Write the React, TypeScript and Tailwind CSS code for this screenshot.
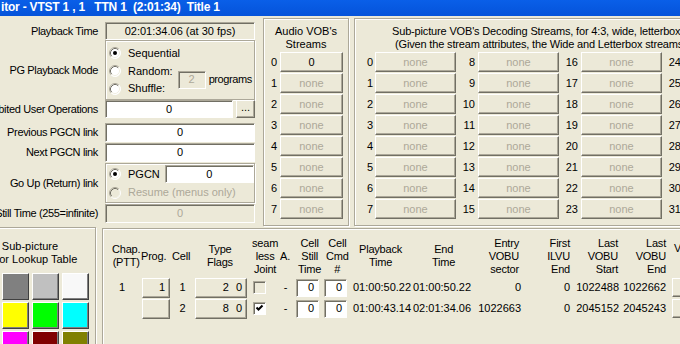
import clsx from "clsx";

const raised =
  "bg-[#ECE9D8] border border-t-white border-l-white border-r-[#716F64] border-b-[#716F64] shadow-[inset_-1px_-1px_0_#ACA899]";
const sunken =
  "border border-t-[#ACA899] border-l-[#ACA899] border-r-white border-b-white shadow-[inset_1px_1px_0_#716F64]";
const groupBox =
  "border border-[#ACA899] shadow-[inset_1px_1px_0_#fff,1px_1px_0_#fff]";

const Edit = ({
  value,
  className,
  white,
  disabled,
  align = "center",
}: {
  value: string;
  className?: string;
  white?: boolean;
  disabled?: boolean;
  align?: "center" | "right";
}) => (
  <div
    className={clsx(
      "flex items-center shrink-0",
      sunken,
      white ? "bg-white" : "bg-[#ECE9D8]",
      disabled ? "text-[#ACA899]" : "text-black",
      align === "right" ? "justify-end pr-[4px]" : "justify-center",
      className
    )}
  >
    {value}
  </div>
);

const Radio = ({ checked, disabled }: { checked?: boolean; disabled?: boolean }) => (
  <svg width="12" height="12" viewBox="0 0 12 12" className="shrink-0">
    <circle cx="6" cy="6" r="5.5" fill={disabled ? "#ECE9D8" : "#fff"} />
    <path d="M2.11 9.89 A5.5 5.5 0 0 1 9.89 2.11" stroke="#ACA899" fill="none" />
    <path d="M2.82 9.18 A4.5 4.5 0 0 1 9.18 2.82" stroke="#716F64" fill="none" />
    <path d="M9.89 2.11 A5.5 5.5 0 0 1 2.11 9.89" stroke="#fff" fill="none" />
    <path d="M9.18 2.82 A4.5 4.5 0 0 1 2.82 9.18" stroke="#F1EFE2" fill="none" />
    {checked && <circle cx="6" cy="6" r="2" fill="#000" />}
  </svg>
);

const Check = ({ checked }: { checked?: boolean }) => (
  <div className={clsx("w-[13px] h-[13px] shrink-0 flex items-center justify-center", sunken, checked ? "bg-white" : "bg-[#ECE9D8]")}>
    {checked && (
      <svg width="9" height="9" viewBox="0 0 9 9">
        <path d="M1.5 3.5 L3.5 5.5 L7.5 1.5" stroke="#000" strokeWidth="2" fill="none" />
      </svg>
    )}
  </div>
);

const LabelRow = ({ label, h, children, className }: { label: string; h: string; children: React.ReactNode; className?: string }) => (
  <div className={clsx("flex items-center shrink-0", h, className)}>
    <div className="w-[138px] text-right whitespace-nowrap tracking-[-0.35px]">{label}</div>
    <div className="ml-[7px] w-[150px] h-full flex">{children}</div>
  </div>
);

const palette = [
  "#000000", "#808080", "#C0C0C0", "#F8F8F8",
  "#0000FF", "#FFFF00", "#00FF00", "#00FFFF",
  "#FF0000", "#FF00FF", "#800000", "#808000",
  "#000080", "#008080", "#008000", "#800080",
];

const headers: { w: string; align: "left" | "right"; lines: string[] }[] = [
  { w: "w-[29px]", align: "left", lines: ["Chap.", "(PTT)"] },
  { w: "w-[31px]", align: "left", lines: ["Prog."] },
  { w: "w-[35px]", align: "left", lines: ["Cell"] },
  { w: "w-[45px]", align: "left", lines: ["Type", "Flags"] },
  { w: "w-[28px]", align: "left", lines: ["seam", "less", "Joint"] },
  { w: "w-[18px]", align: "left", lines: ["A."] },
  { w: "w-[28px]", align: "left", lines: ["Cell", "Still", "Time"] },
  { w: "w-[33px]", align: "left", lines: ["Cell", "Cmd", "#"] },
  { w: "w-[73px]", align: "left", lines: ["Playback", "Time"] },
  { w: "w-[40px]", align: "left", lines: ["End", "Time"] },
  { w: "w-[47px]", align: "right", lines: ["Entry", "VOBU", "sector"] },
  { w: "w-[51px]", align: "right", lines: ["First", "ILVU", "End"] },
  { w: "w-[48px]", align: "right", lines: ["Last", "VOBU", "Start"] },
  { w: "w-[48px]", align: "right", lines: ["Last", "VOBU", "End"] },
];

const cells = [
  { chap: "1", prog: "1", cell: "1", type: "2", flag: "0", seam: false, play: "01:00:50.22", end: "01:00:50.22", entry: "0", first: "0", lstart: "1022488", lend: "1022662" },
  { chap: "", prog: "", cell: "2", type: "8", flag: "0", seam: true, play: "01:00:43.14", end: "02:01:34.06", entry: "1022663", first: "0", lstart: "2045152", lend: "2045243" },
];

export default function App() {
  return (
    <div className="w-[680px] h-[344px] overflow-hidden bg-[#ECE9D8] flex flex-col font-['Liberation_Sans',Arial,sans-serif] text-[11px] leading-[13px] text-black">
      {/* title bar */}
      <div className="h-[16px] shrink-0 bg-gradient-to-b from-[#0A5FE8] to-[#0553DA] text-white font-bold text-[12px] leading-[15px] whitespace-pre pl-[1px] tracking-[-0.2px]">
        {"itor - VTST 1 , 1   TTN 1  (2:01:34)  Title 1"}
      </div>

      {/* top area */}
      <div className="flex h-[211px] shrink-0">
        <div className="ml-[-40px] w-[303px] shrink-0 flex flex-col pt-[6px]">
          <LabelRow label="Playback Time" h="h-[18px]">
            <Edit value="02:01:34.06 (at 30 fps)" className="w-[150px] h-[18px]" />
          </LabelRow>
          <LabelRow label="PG Playback Mode" h="h-[60px]">
            <div className={clsx("w-[150px] h-[60px] flex flex-col pl-[3px] pt-[3px]", groupBox)}>
              <div className="flex items-center h-[18px]">
                <Radio checked />
                <span className="ml-[7px]">Sequential</span>
              </div>
              <div className="flex items-center">
                <div className="flex flex-col">
                  <div className="flex items-center h-[18px]">
                    <Radio />
                    <span className="ml-[7px]">Random:</span>
                  </div>
                  <div className="flex items-center h-[17px]">
                    <Radio />
                    <span className="ml-[7px]">Shuffle:</span>
                  </div>
                </div>
                <Edit value="2" disabled className="ml-[5px] w-[28px] h-[18px]" />
                <span className="ml-[3px] tracking-[-0.4px]">programs</span>
              </div>
            </div>
          </LabelRow>
          <LabelRow label="Prohibited User Operations" h="h-[18px]">
            <Edit value="0" white className="w-[128px] h-[18px]" />
            <div className={clsx("ml-[3px] w-[19px] h-[18px] flex items-end justify-center pb-[3px]", raised)}>...</div>
          </LabelRow>
          <LabelRow label="Previous PGCN link" h="h-[19px]" className="mt-[5px]">
            <Edit value="0" white className="w-[150px] h-[19px]" />
          </LabelRow>
          <LabelRow label="Next PGCN link" h="h-[19px]" className="mt-[1px]">
            <Edit value="0" white className="w-[150px] h-[19px]" />
          </LabelRow>
          <LabelRow label="Go Up (Return) link" h="h-[40px]" className="mt-[1px]">
            <div className={clsx("w-[150px] h-[40px] flex flex-col pl-[3px] pr-[3px] pt-[1px]", groupBox)}>
              <div className="flex items-center h-[18px]">
                <Radio checked />
                <span className="ml-[7px]">PGCN</span>
                <Edit value="0" white className="ml-[5px] w-[89px] h-[18px]" />
              </div>
              <div className="flex items-center h-[19px] text-[#ACA899]">
                <Radio disabled />
                <span className="ml-[7px]">Resume (menus only)</span>
              </div>
            </div>
          </LabelRow>
          <LabelRow label="Still Time (255=infinite)" h="h-[19px]" className="mt-[1px]">
            <Edit value="0" disabled className="w-[150px] h-[19px]" />
          </LabelRow>
        </div>

        {/* audio streams */}
        <div className={clsx("mt-[2px] h-[208px] w-[86px] shrink-0 flex flex-col pt-[6px]", groupBox)}>
          <div className="text-center">
            Audio VOB's
            <br />
            Streams
          </div>
          <div className="mt-[1px] flex flex-col gap-[1px]">
            {[0, 1, 2, 3, 4, 5, 6, 7].map((i) => (
              <div key={i} className="flex items-center h-[20px]">
                <div className="w-[16px] pl-[7px]">{i}</div>
                <div className={clsx("w-[63px] h-[20px] flex items-center justify-center", raised, i === 0 ? "text-black" : "text-[#ACA899]")}>
                  {i === 0 ? "0" : "none"}
                </div>
              </div>
            ))}
          </div>
        </div>

        {/* sub-picture streams */}
        <div className={clsx("ml-[5px] mt-[2px] h-[208px] w-[430px] shrink-0 flex flex-col pt-[6px]", groupBox)}>
          <div className="pl-[37px] whitespace-nowrap tracking-[-0.16px]">Sub-picture VOB's Decoding Streams, for 4:3, wide, letterbox, pan-scan</div>
          <div className="pl-[40px] whitespace-nowrap tracking-[-0.16px]">(Given the stream attributes, the Wide and Letterbox streams are used)</div>
          <div className="mt-[1px] flex flex-col gap-[1px]">
            {[0, 1, 2, 3, 4, 5, 6, 7].map((r) => (
              <div key={r} className="flex items-center h-[20px]">
                {[0, 1, 2, 3].map((c) => (
                  <div key={c} className="flex items-center">
                    <div className={clsx("text-right", c === 0 ? "w-[20px] pr-[2px]" : "w-[22px] pr-[3px]")}>{c * 8 + r}</div>
                    <div className={clsx("w-[81px] h-[20px] flex items-center justify-center text-[#ACA899]", raised)}>none</div>
                  </div>
                ))}
              </div>
            ))}
          </div>
        </div>
      </div>

      {/* bottom area */}
      <div className="flex shrink-0">
        <div className={clsx("ml-[-36px] w-[132px] h-[130px] shrink-0 flex flex-col items-center pt-[12px]", groupBox)}>
          <div className="text-center">
            Sub-picture
            <br />
            Color Lookup Table
          </div>
          <div className="mt-[7px] grid grid-cols-4 gap-x-[3px] gap-y-[2px]">
            {palette.map((col, i) => (
              <div
                key={i}
                className="w-[27px] h-[27px] border border-t-white border-l-white border-r-[#404040] border-b-[#404040] shadow-[inset_-1px_-1px_0_#808080]"
                style={{ backgroundColor: col }}
              />
            ))}
          </div>
        </div>

        <div className={clsx("ml-[6px] mt-[1px] w-[700px] h-[130px] shrink-0 flex flex-col pt-[7px]", groupBox)}>
          <div className="flex items-center h-[40px] pl-[9px] tracking-[-0.2px]">
            {headers.map((h, i) => (
              <div key={i} className={clsx("shrink-0 flex whitespace-nowrap", h.w, h.align === "right" ? "justify-end" : "justify-start")}>
                <div className={h.align === "right" ? "text-right" : "text-center"}>
                  {h.lines.map((l, j) => (
                    <div key={j}>{l}</div>
                  ))}
                </div>
              </div>
            ))}
            <div className="ml-[8px] self-start mt-[6px]">V</div>
          </div>
          <div className="mt-[1px] flex flex-col">
            {cells.map((c, i) => (
              <div key={i} className="flex items-center h-[21px] whitespace-nowrap">
                <div className="w-[38px] text-center">{c.chap}</div>
                <div className={clsx("ml-[1px] w-[28px] h-[20px] flex items-center justify-end pr-[4px]", raised)}>{c.prog}</div>
                <div className="w-[25px] text-center">{c.cell}</div>
                <div className={clsx("w-[52px] h-[20px] flex items-center justify-end pr-[4px]", raised)}>
                  <span>{c.type}</span>
                  <span className="ml-[7px]">{c.flag}</span>
                </div>
                <div className="ml-[6px]">
                  <Check checked={c.seam} />
                </div>
                <div className="ml-[9px] w-[21px] text-center">-</div>
                <Edit value="0" white align="right" className="w-[23px] h-[18px]" />
                <Edit value="0" white align="right" className="ml-[5px] w-[23px] h-[18px]" />
                <div className="ml-[6px] w-[60px]">{c.play}</div>
                <div className="w-[62px]">{c.end}</div>
                <div className="w-[46px] text-right">{c.entry}</div>
                <div className="w-[49px] text-right">{c.first}</div>
                <div className="w-[49px] text-right">{c.lstart}</div>
                <div className="w-[47px] text-right">{c.lend}</div>
                <div className={clsx("ml-[6px] w-[30px] h-[19px]", raised)} />
              </div>
            ))}
          </div>
        </div>
      </div>
    </div>
  );
}
